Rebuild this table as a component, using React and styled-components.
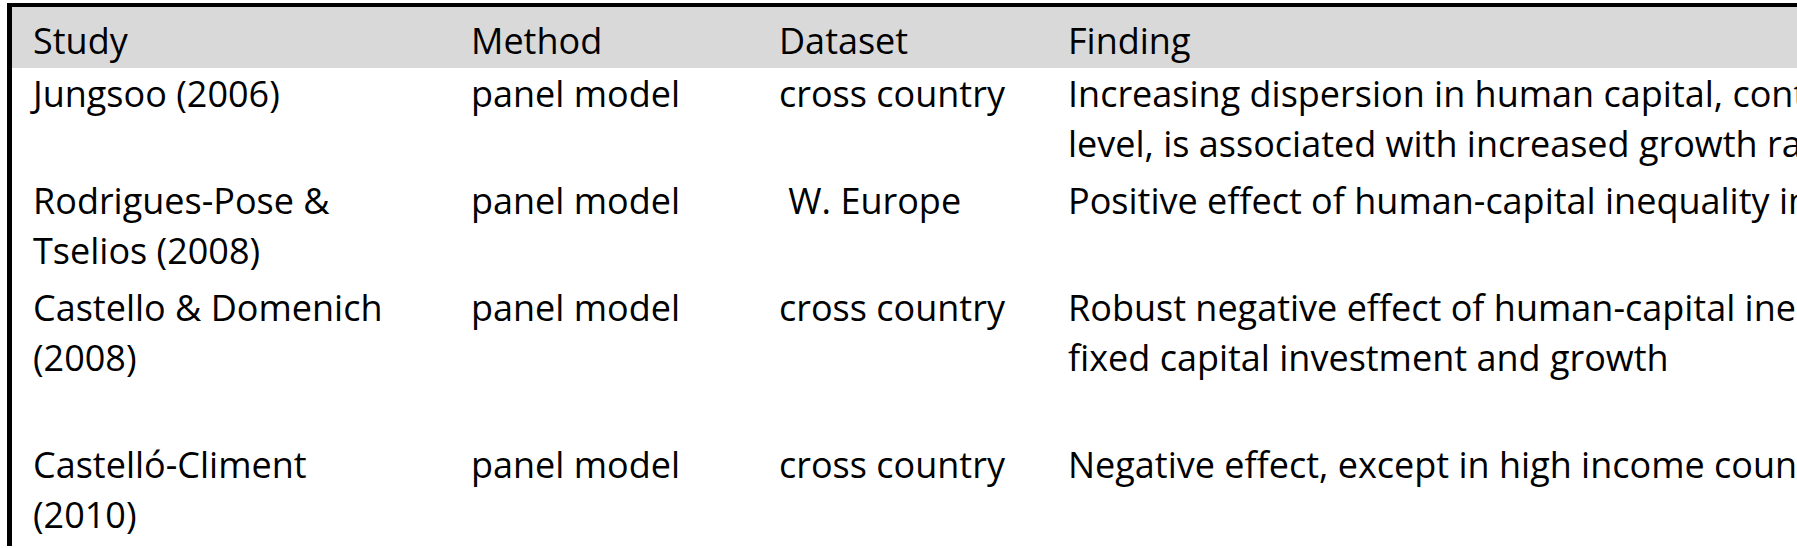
import React from "react";
import styled, { createGlobalStyle } from "styled-components";

const GlobalStyle = createGlobalStyle`
  html, body {
    margin: 0;
    padding: 0;
    background: #ffffff;
    overflow: hidden;
  }
`;

const Page = styled.div`
  width: 1797px;
  height: 548px;
  overflow: hidden;
  padding: 3px 0 0 7px;
  box-sizing: border-box;
  font-family: "Open Sans", "Noto Sans", sans-serif;
  font-size: 36px;
  color: #000;
`;

const Table = styled.div`
  width: 2400px;
  border-top: 4px solid #000;
  border-left: 5px solid #000;
`;

const Row = styled.div`
  display: grid;
  grid-template-columns: 438px 308px 289px 1365px;
  background: ${(p) => (p.$head ? "#d9d9d9" : "transparent")};
  padding: ${(p) => (p.$head ? "9px 0 2px" : "1px 0 6px")};
`;

const Cell = styled.div`
  padding-left: 21px;
  display: flex;
  flex-direction: column;
`;

const Line = styled.span`
  display: block;
  height: 50px;
  line-height: 50px;
  white-space: pre;
`;

const columns = ["Study", "Method", "Dataset", "Finding"];

const rows = [
  {
    study: ["Jungsoo (2006)"],
    method: ["panel model"],
    dataset: ["cross country"],
    finding: [
      "Increasing dispersion in human capital, controlling for the average",
      "level, is associated with increased growth rates",
    ],
  },
  {
    study: ["Rodrigues-Pose &", "Tselios (2008)"],
    method: ["panel model"],
    dataset: [" W. Europe"],
    finding: ["Positive effect of human-capital inequality in European regions"],
  },
  {
    study: ["Castello & Domenich", "(2008)"],
    method: ["panel model"],
    dataset: ["cross country"],
    finding: [
      "Robust negative effect of human-capital inequality on investment in",
      "fixed capital investment and growth",
      "",
    ],
  },
  {
    study: ["Castelló-Climent", "(2010)"],
    method: ["panel model"],
    dataset: ["cross country"],
    finding: ["Negative effect, except in high income countries"],
  },
];

function Lines({ items }) {
  return (
    <Cell>
      {items.map((t, i) => (
        <Line key={i}>{t}</Line>
      ))}
    </Cell>
  );
}

export default function App() {
  return (
    <>
      <GlobalStyle />
      <Page>
        <Table>
          <Row $head>
            {columns.map((c) => (
              <Lines key={c} items={[c]} />
            ))}
          </Row>
          {rows.map((r, i) => (
            <Row key={i}>
              <Lines items={r.study} />
              <Lines items={r.method} />
              <Lines items={r.dataset} />
              <Lines items={r.finding} />
            </Row>
          ))}
        </Table>
      </Page>
    </>
  );
}
